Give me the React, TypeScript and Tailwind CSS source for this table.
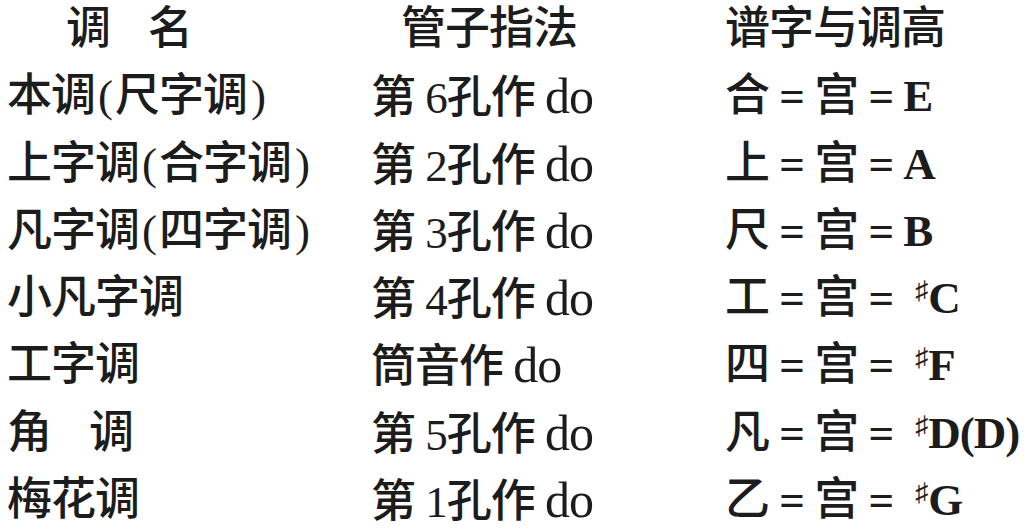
import React from "react";

const FONT = {
  fontFamily: "'Liberation Serif', 'Noto Sans CJK SC', serif",
};

type Row = { name: React.ReactNode; hole: React.ReactNode; pitch: React.ReactNode };

// key name with its alternate name in brackets
const Name = ({ main, alt }: { main: string; alt?: string }) => (
  <>
    {main}
    {alt && (
      <>
        <span className="px-[3px]">(</span>
        {alt}
        <span className="px-[4px]">)</span>
      </>
    )}
  </>
);

const Hole = ({ pre, n }: { pre: string; n?: string }) => (
  <>
    {pre}
    {n && <> {n}</>}
    孔作 <span className="text-[50px]">do</span>
  </>
);

const Sharp = () => (
  <span className="relative -top-[14px] ml-[12px] mr-[1px] text-[26px] leading-none font-normal">♯</span>
);

const Pitch = ({ pu, note, sharp }: { pu: string; note: string; sharp?: boolean }) => (
  <>
    {pu} <span className="font-bold">=</span> 宫 <span className="font-bold">=</span>{" "}
    {sharp && <Sharp />}
    <span className="font-bold">{note}</span>
  </>
);

const rows: Row[] = [
  { name: <Name main="本调" alt="尺字调" />, hole: <Hole pre="第" n="6" />, pitch: <Pitch pu="合" note="E" /> },
  { name: <Name main="上字调" alt="合字调" />, hole: <Hole pre="第" n="2" />, pitch: <Pitch pu="上" note="A" /> },
  { name: <Name main="凡字调" alt="四字调" />, hole: <Hole pre="第" n="3" />, pitch: <Pitch pu="尺" note="B" /> },
  { name: <Name main="小凡字调" />, hole: <Hole pre="第" n="4" />, pitch: <Pitch pu="工" note="C" sharp /> },
  {
    name: <Name main="工字调" />,
    hole: (
      <>
        筒音作 <span className="text-[50px]">do</span>
      </>
    ),
    pitch: <Pitch pu="四" note="F" sharp />,
  },
  {
    name: (
      <>
        角<span className="ml-[38px]">调</span>
      </>
    ),
    hole: <Hole pre="第" n="5" />,
    pitch: <Pitch pu="凡" note="D(D)" sharp />,
  },
  { name: <Name main="梅花调" />, hole: <Hole pre="第" n="1" />, pitch: <Pitch pu="乙" note="G" sharp /> },
];

export default function App() {
  return (
    <div
      className="w-[1033px] h-[531px] overflow-hidden bg-white text-[#1c1c1c] text-[45px] font-medium leading-[67px] tracking-[-1px]"
      style={FONT}
    >
      <div className="-mt-[4px] grid grid-cols-[364px_354px_1fr] auto-rows-[67.3px] pl-[7px] whitespace-nowrap">
        <div className="pl-[59px]">
          调<span className="ml-[38px]">名</span>
        </div>
        <div className="pl-[30px]">管子指法</div>
        <div>谱字与调高</div>
        {rows.map((r, i) => (
          <React.Fragment key={i}>
            <div>{r.name}</div>
            <div>{r.hole}</div>
            <div>{r.pitch}</div>
          </React.Fragment>
        ))}
      </div>
    </div>
  );
}
